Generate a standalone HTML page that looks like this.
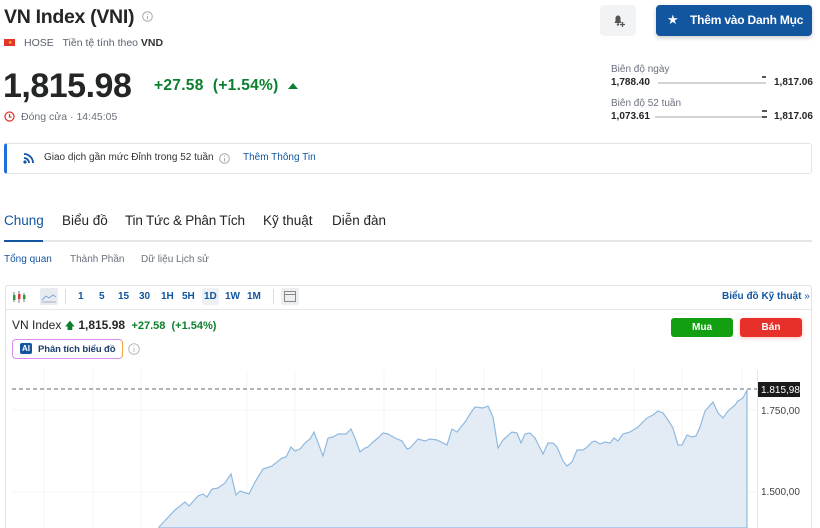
<!DOCTYPE html>
<html><head><meta charset="utf-8"><style>
*{margin:0;padding:0;box-sizing:border-box}
html{width:820px;height:528px;overflow:hidden}
body{width:820px;height:528px;overflow:hidden;background:#fff;font-family:"Liberation Sans",sans-serif;color:#232526;position:relative}
.a{position:absolute;white-space:nowrap}
.g{color:#0a7f2e}
.blue{color:#1256a0}
</style></head><body>
<div class="a" style="left:4px;top:6px;font-size:19.5px;font-weight:bold;letter-spacing:-0.3px">VN Index (VNI)</div>
<svg class="a" style="left:142px;top:11px" width="11" height="11"><circle cx="5.5" cy="5.5" r="4.8" fill="none" stroke="#aaa"/><rect x="5" y="5" width="1" height="3.5" fill="#aaa"/><rect x="5" y="2.6" width="1" height="1" fill="#aaa"/></svg>
<div class="a" style="left:4px;top:39px;width:11px;height:7px;background:#e3342f"></div>
<div class="a" style="left:8px;top:40px;color:#ffde00;font-size:5px">★</div>
<div class="a" style="left:24px;top:37px;font-size:10.5px;color:#5b616e">HOSE &nbsp;&nbsp;Tiền tệ tính theo <b style="color:#333">VND</b></div>
<div class="a" style="left:3px;top:67px;font-size:34px;font-weight:bold;letter-spacing:-0.5px">1,815.98</div>
<div class="a g" style="left:154px;top:77px;font-size:15.5px;font-weight:bold;letter-spacing:0.3px">+27.58 &nbsp;(+1.54%)</div>
<div class="a" style="left:288px;top:83px;width:0;height:0;border-left:5px solid transparent;border-right:5px solid transparent;border-bottom:6px solid #0a7f2e"></div>
<svg class="a" style="left:4px;top:111px" width="11" height="11"><circle cx="5.5" cy="5.5" r="4.5" fill="none" stroke="#e3342f" stroke-width="1.3"/><path d="M5.5 3v3h2" fill="none" stroke="#e3342f" stroke-width="1.2"/></svg>
<div class="a" style="left:21px;top:111px;font-size:10.5px;color:#6a707c">Đóng cửa · 14:45:05</div>

<div class="a" style="left:600px;top:5px;width:36px;height:31px;background:#f2f3f5;border-radius:4px"></div>
<svg class="a" style="left:611px;top:12px" width="16" height="16"><path d="M3.5 11h7L9.5 9V6a2.5 2.5 0 0 0-5 0v3z" fill="#555"/><circle cx="7" cy="12.5" r="1.2" fill="#555"/><path d="M11.5 10v5M9 12.5h5" stroke="#555" stroke-width="1.3"/></svg>
<div class="a" style="left:656px;top:5px;width:156px;height:31px;background:#1256a0;border-radius:4px;box-shadow:0 2px 4px rgba(0,0,0,.2)"></div>
<div class="a" style="left:667px;top:12px;color:#fff;font-size:13px">★</div>
<div class="a" style="left:690px;top:13px;color:#fff;font-size:12px;font-weight:bold;letter-spacing:-0.2px">Thêm vào Danh Mục</div>

<div class="a" style="left:611px;top:64px;font-size:10px;color:#6a707c">Biên độ ngày</div>
<div class="a" style="left:611px;top:77px;font-size:10px;font-weight:bold">1,788.40</div>
<div class="a" style="left:658px;top:82px;width:108px;height:2px;background:#d0d2d6"></div>
<div class="a" style="left:762px;top:76px;width:4px;height:5px;border-top:2px solid #555"></div>
<div class="a" style="left:774px;top:77px;font-size:10px;font-weight:bold">1,817.06</div>
<div class="a" style="left:611px;top:98px;font-size:10px;color:#6a707c">Biên độ 52 tuần</div>
<div class="a" style="left:611px;top:111px;font-size:10px;font-weight:bold">1,073.61</div>
<div class="a" style="left:655px;top:116px;width:111px;height:2px;background:#d0d2d6"></div>
<div class="a" style="left:762px;top:110px;width:5px;height:8px;border-top:2px solid #555;border-bottom:2px solid #555"></div>
<div class="a" style="left:774px;top:111px;font-size:10px;font-weight:bold">1,817.06</div>

<div class="a" style="left:4px;top:143px;width:808px;height:31px;border:1px solid #e2e4e7;border-left:3px solid #1e6fdc;border-radius:3px"></div>
<svg class="a" style="left:23px;top:152px" width="12" height="12"><circle cx="2" cy="10" r="1.6" fill="#1256a0"/><path d="M1 6a5 5 0 0 1 5 5M1 2a9 9 0 0 1 9 9" fill="none" stroke="#1256a0" stroke-width="1.8"/></svg>
<div class="a" style="left:44px;top:152px;font-size:10px;color:#333">Giao dịch gần mức Đỉnh trong 52 tuần</div>
<svg class="a" style="left:219px;top:153px" width="11" height="11"><circle cx="5.5" cy="5.5" r="4.8" fill="none" stroke="#aaa"/><rect x="5" y="5" width="1" height="3.5" fill="#aaa"/><rect x="5" y="2.6" width="1" height="1" fill="#aaa"/></svg>
<div class="a blue" style="left:243px;top:152px;font-size:10px">Thêm Thông Tin</div>

<div class="a" style="left:4px;top:213px;font-size:13.5px;color:#1256a0">Chung</div>
<div class="a" style="left:62px;top:213px;font-size:13.5px">Biểu đồ</div>
<div class="a" style="left:125px;top:213px;font-size:13.5px;letter-spacing:-0.2px">Tin Tức &amp; Phân Tích</div>
<div class="a" style="left:263px;top:213px;font-size:13.5px">Kỹ thuật</div>
<div class="a" style="left:332px;top:213px;font-size:13.5px">Diễn đàn</div>
<div class="a" style="left:4px;top:240px;width:808px;height:2px;background:#e4e6ea"></div>
<div class="a" style="left:4px;top:240px;width:39px;height:2px;background:#1256a0"></div>
<div class="a blue" style="left:4px;top:254px;font-size:10px">Tổng quan</div>
<div class="a" style="left:70px;top:254px;font-size:10px;color:#6a707c">Thành Phần</div>
<div class="a" style="left:141px;top:254px;font-size:10px;color:#6a707c">Dữ liệu Lịch sử</div>

<div class="a" style="left:5px;top:285px;width:807px;height:243px;border:1px solid #e0e2e6;border-bottom:none;border-radius:3px 3px 0 0"></div>
<div class="a" style="left:5px;top:309px;width:807px;height:1px;background:#e6e7ea"></div>
<svg class="a" style="left:12px;top:290px" width="16" height="14"><path d="M2 2v10M7 1v12M12 3v9" stroke="#777"/><rect x="1" y="5" width="2.5" height="5" fill="#2a9d3a"/><rect x="6" y="4" width="2.5" height="5" fill="#e3342f"/><rect x="11" y="5" width="2.5" height="4" fill="#2a9d3a"/></svg>
<div class="a" style="left:40px;top:288px;width:18px;height:17px;background:#e8ebf0;border-radius:2px"></div>
<svg class="a" style="left:41px;top:291px" width="16" height="12"><path d="M1 9l4-4 3 2 4-3 3 2" fill="none" stroke="#7aa7d6"/><path d="M1 11h14" stroke="#aac"/></svg>
<div class="a" style="left:65px;top:289px;width:1px;height:15px;background:#ddd"></div>
<div class="a blue" style="left:78px;top:291px;font-size:10px;font-weight:bold">1</div>
<div class="a blue" style="left:99px;top:291px;font-size:10px;font-weight:bold">5</div>
<div class="a blue" style="left:118px;top:291px;font-size:10px;font-weight:bold">15</div>
<div class="a blue" style="left:139px;top:291px;font-size:10px;font-weight:bold">30</div>
<div class="a blue" style="left:161px;top:291px;font-size:10px;font-weight:bold">1H</div>
<div class="a blue" style="left:182px;top:291px;font-size:10px;font-weight:bold">5H</div>
<div class="a" style="left:202px;top:288px;width:17px;height:17px;background:#eef0f3;border-radius:2px"></div>
<div class="a blue" style="left:204px;top:291px;font-size:10px;font-weight:bold">1D</div>
<div class="a blue" style="left:225px;top:291px;font-size:10px;font-weight:bold">1W</div>
<div class="a blue" style="left:247px;top:291px;font-size:10px;font-weight:bold">1M</div>
<div class="a" style="left:273px;top:289px;width:1px;height:15px;background:#ddd"></div>
<div class="a" style="left:281px;top:288px;width:18px;height:17px;background:#eceef1;border-radius:2px"></div>
<div class="a" style="left:284px;top:291px;width:12px;height:11px;border:1px solid #888"></div>
<div class="a" style="left:284px;top:294px;width:12px;height:1px;background:#888"></div>
<div class="a blue" style="left:722px;top:291px;font-size:10px;font-weight:bold">Biểu đồ Kỹ thuật <span style="font-weight:normal">»</span></div>

<div class="a" style="left:12px;top:318px;font-size:12px">VN Index <span class="g" style="font-size:10px">🡅</span> <b>1,815.98</b> <span class="g" style="font-size:11px;font-weight:bold">&nbsp;+27.58 &nbsp;(+1.54%)</span></div>
<div class="a" style="left:12px;top:339px;width:111px;height:20px;border:1px solid #d98cf0;border-right-color:#f4a040;border-radius:4px"></div>
<div class="a" style="left:20px;top:343px;width:12px;height:11px;background:#1256a0;border-radius:2px;color:#fff;font-size:8px;font-weight:bold;text-align:center;line-height:11px">AI</div>
<div class="a" style="left:38px;top:344px;font-size:9.5px;font-weight:bold;color:#1c3d6e;letter-spacing:-0.1px">Phân tích biểu đồ</div>
<svg class="a" style="left:128px;top:343px" width="12" height="12"><circle cx="6" cy="6" r="5.3" fill="none" stroke="#bbb"/><rect x="5.5" y="5" width="1" height="4" fill="#bbb"/><rect x="5.5" y="2.8" width="1" height="1" fill="#bbb"/></svg>
<div class="a" style="left:671px;top:318px;width:62px;height:19px;background:#12a012;border-radius:3px;color:#fff;font-size:10px;font-weight:bold;text-align:center;line-height:19px">Mua</div>
<div class="a" style="left:740px;top:318px;width:62px;height:19px;background:#e8302a;border-radius:3px;color:#fff;font-size:10px;font-weight:bold;text-align:center;line-height:19px;box-shadow:0 1px 4px rgba(232,48,42,.3)">Bán</div>

<svg class="a" style="left:0;top:370px" width="820" height="158">
<g stroke="#f4f5f7"><path d="M44 0v158M93 0v158M141 0v158M247 0v158M295 0v158M384 0v158M436 0v158M484 0v158M542 0v158M634 0v158M682 0v158M742 0v158"/><path d="M12 40h745M12 122h745"/></g>
<path d="M159 157L175 140L185 132L189 136L198 126L203 124L207 127L212 119L218 118L225 113L231 104L236 125L240 121L249 124L255 112L263 99L272 96L282 88L286 87L291 77L295 81L300 79L305 73L310 69L314 62L323 86L328 68L333 67L338 64L346 64L351 59L355 68L360 82L365 78L368 77L373 72L378 68L383 63L388 64L395 68L402 71L407 79L410 78L418 69L425 71L430 69L437 70L447 75L452 59L457 62L465 52L472 41L475 37L483 38L488 36L493 47L498 78L503 70L512 62L517 63L521 73L525 64L530 63L535 68L543 84L548 73L553 73L557 77L563 91L567 96L572 92L577 80L583 80L586 78L592 72L595 71L600 74L605 72L610 73L614 68L618 71L623 64L630 62L638 57L647 48L653 45L658 41L663 43L668 50L673 58L678 75L682 75L687 65L692 67L696 66L700 57L705 41L713 32L718 43L723 48L728 41L735 35L738 31L743 28L747 20L747 158L159 158Z" fill="#e3ecf5" stroke="#8fb9e0" stroke-width="1.2"/>
<path d="M12 19H757" stroke="#888" stroke-dasharray="4 3" stroke-width="1.2"/>
<path d="M757.5 0v158" stroke="#e6e7ea"/>
<rect x="758" y="12" width="42" height="15" fill="#1a1a1a"/>
<text x="761" y="23" font-size="10" fill="#fff" font-family="Liberation Sans">1.815,98</text>
<text x="761" y="44" font-size="10" fill="#444" font-family="Liberation Sans">1.750,00</text>
<text x="761" y="125" font-size="10" fill="#444" font-family="Liberation Sans">1.500,00</text>
</svg>
</body></html>
